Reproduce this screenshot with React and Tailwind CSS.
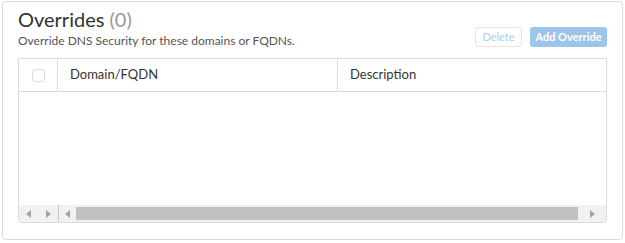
import { useState } from "react";

function Arrow({ dir }) {
    return (
        <svg width="5" height="8" viewBox="0 0 5 8" className="block">
            {dir === "left" ? (
                <polygon points="5,0 5,8 0,4" fill="#a3a3a3" />
            ) : (
                <polygon points="0,0 0,8 5,4" fill="#a3a3a3" />
            )}
        </svg>
    );
}

export default function App() {
    const [overrides] = useState([]);

    return (
        <div className="w-[625px] h-[243px] bg-white pt-[1px] pl-[2px] font-['Lato','Liberation_Sans',sans-serif]">
            <div className="w-[621px] h-[239px] border border-[#dcdcdc] rounded-[4px] px-[15px] pt-[5px]">
                <div className="flex justify-between items-end">
                    <div>
                        <h1 className="text-[20px] leading-[24px] text-[#333]">
                            Overrides <span className="text-[#999]">({overrides.length})</span>
                        </h1>
                        <p className="text-[12px] leading-[16px] mt-[2px] text-[#555]">
                            Override DNS Security for these domains or FQDNs.
                        </p>
                    </div>
                    <div className="flex gap-[8px] mb-[2px]">
                        <button className="h-[20px] w-[47px] rounded-[3px] border border-[#e3e3e3] bg-white text-[11px] text-[#a9cdee]">
                            Delete
                        </button>
                        <button className="h-[20px] w-[77px] rounded-[3px] bg-[#9dc5ea] text-[11px] font-bold text-white">
                            Add Override
                        </button>
                    </div>
                </div>

                <div className="mt-[9px] h-[165px] border border-[#dcdcdc] rounded-b-[3px] flex flex-col">
                    <div className="flex h-[33px] border-b border-[#dcdcdc] text-[13px] text-[#333]">
                        <div className="w-[39px] border-r border-[#dcdcdc] flex items-center justify-center">
                            <div className="w-[13px] h-[13px] rounded-[3px] border border-[#dcdcdc] bg-white" />
                        </div>
                        <div className="w-[280px] border-r border-[#dcdcdc] flex items-center pl-[12px]">
                            Domain/FQDN
                        </div>
                        <div className="flex-1 flex items-center pl-[12px]">Description</div>
                    </div>
                    <div className="flex-1" />
                    <div className="flex h-[17px] bg-[#f1f1f1]">
                        <div className="w-[40px] border-r border-[#c8c8c8] flex items-center justify-between px-[7px]">
                            <Arrow dir="left" />
                            <Arrow dir="right" />
                        </div>
                        <div className="flex-1 flex items-center">
                            <div className="w-[17px] flex justify-center">
                                <Arrow dir="left" />
                            </div>
                            <div className="w-[502px] h-[13px] bg-[#c1c1c1]" />
                            <div className="flex-1 flex justify-center">
                                <Arrow dir="right" />
                            </div>
                        </div>
                    </div>
                </div>
            </div>
        </div>
    );
}
